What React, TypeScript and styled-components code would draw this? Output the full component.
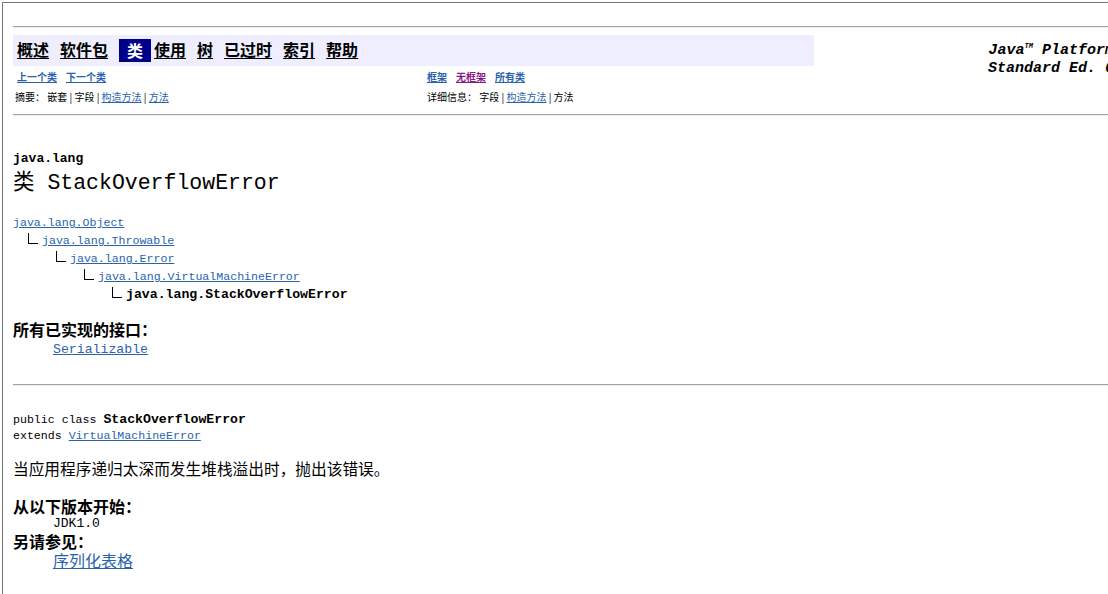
import React from "react";
import styled, { createGlobalStyle } from "styled-components";

const Global = createGlobalStyle`
  html, body { margin: 0; padding: 0; background: #ffffff; overflow: hidden; }
  body { font-family: "Noto Sans CJK SC", sans-serif; color: #000; }
`;

const LINK = "#2a63ab";
const CJK = `"Noto Sans CJK SC", sans-serif`;
const MONO = `"Liberation Mono", "Noto Sans CJK SC", monospace`;

const Frame = styled.div`
  margin: 2px 0 0 2px;
  width: 1112px;
  height: 600px;
  box-sizing: border-box;
  border-top: 1px solid #767676;
  border-left: 1px solid #767676;
  padding-left: 10px;
`;

const Rule = styled.hr<{ $top: number }>`
  margin: ${(p) => p.$top}px 0 0 0;
  height: 0;
  border: 0;
  border-top: 1px solid #a2a2a2;
  border-bottom: 1px solid #eeeeee;
`;

const Header = styled.div`
  display: grid;
  grid-template-columns: 801px 1fr;
  margin-top: 7px;
`;

const NavBar = styled.div`
  display: flex;
  align-items: center;
  height: 31px;
  background: #eeeeff;
`;

const NavLink = styled.a<{ $afterCurrent?: boolean }>`
  margin-bottom: 3px;
  padding: 0 7px 0 ${(p) => (p.$afterCurrent ? 3 : 4)}px;
  font-family: ${CJK};
  font-size: 16px;
  font-weight: 700;
  line-height: 20px;
  color: #000;
  text-decoration: underline;
  text-underline-offset: 2px;
`;

const NavCurrent = styled.span`
  display: flex;
  align-items: center;
  justify-content: center;
  margin: 0 0 1px 4px;
  width: 32px;
  height: 23px;
  background: #00008b;
  color: #fff;
  font-family: ${CJK};
  font-size: 16px;
  font-weight: 700;
`;

const SubNav = styled.div`
  display: grid;
  grid-template-columns: 414px 1fr;
  grid-auto-rows: 20px;
  align-items: center;
  margin-top: 1px;
  font-family: ${CJK};
  font-size: 10px;
  line-height: 14px;
`;

const SubCell = styled.div<{ $pad: number }>`
  padding-left: ${(p) => p.$pad}px;
  white-space: pre;
`;

const SmallLink = styled.a<{ $bold?: boolean; $visited?: boolean }>`
  color: ${(p) => (p.$visited ? "#8a1a8a" : LINK)};
  font-weight: ${(p) => (p.$bold ? 700 : 400)};
  text-decoration: underline;
  margin-right: ${(p) => (p.$bold ? 9 : 0)}px;
`;

const Platform = styled.div`
  padding-top: 7px;
  text-align: right;
  font-family: "Liberation Mono", monospace;
  font-style: italic;
  font-weight: 700;
  font-size: 15px;
  line-height: 18px;
  white-space: nowrap;
`;

const Sup = styled.sup`
  font-size: 7px;
  vertical-align: 6px;
  line-height: 0;
`;

const PackageLabel = styled.div`
  margin-top: 35px;
  font-family: ${MONO};
  font-weight: 700;
  font-size: 13px;
  line-height: 16px;
`;

const ClassTitle = styled.h2`
  margin: 3px 0 0;
  font-family: ${MONO};
  font-weight: 400;
  font-size: 21.5px;
  line-height: 26px;
`;

const Tree = styled.div`
  margin-top: 18px;
`;

const TreeRow = styled.div<{ $indent: number }>`
  display: flex;
  align-items: center;
  height: 18px;
  padding-left: ${(p) => p.$indent}px;
  font-family: ${MONO};
  font-size: 11.6px;
  line-height: 18px;
`;

const Elbow = styled.span`
  align-self: flex-start;
  margin: 1px 4px 0 0;
  width: 9px;
  height: 10px;
  border-left: 1px solid #000;
  border-bottom: 1px solid #000;
`;

const CodeLink = styled.a<{ $size?: number }>`
  color: ${LINK};
  text-decoration: underline;
  font-size: ${(p) => p.$size ?? 11.6}px;
`;

const Strong = styled.b`
  font-weight: 700;
  font-size: 13.2px;
`;

const Heading = styled.div<{ $top: number }>`
  margin-top: ${(p) => p.$top}px;
  font-family: ${CJK};
  font-weight: 700;
  font-size: 16px;
  line-height: 18px;
`;

const Indented = styled.div<{ $top?: number; $lh: number }>`
  margin-top: ${(p) => p.$top ?? 0}px;
  padding-left: 40px;
  line-height: ${(p) => p.$lh}px;
  font-family: ${MONO};
  font-size: 13px;
`;

const CjkLink = styled.a`
  color: ${LINK};
  text-decoration: underline;
  font-family: ${CJK};
  font-size: 16px;
`;

const Signature = styled.div`
  margin-top: 26px;
  font-family: ${MONO};
  font-size: 11.6px;
`;

const SigLine = styled.div`
  display: flex;
  align-items: center;
  height: 16px;
  line-height: 16px;
  white-space: pre;
`;

const Description = styled.p`
  margin: 15px 0 0;
  font-family: ${CJK};
  font-size: 15.7px;
  line-height: 20px;
`;

const navItems = ["概述", "软件包", "类", "使用", "树", "已过时", "索引", "帮助"];

const tree = [
  "java.lang.Object",
  "java.lang.Throwable",
  "java.lang.Error",
  "java.lang.VirtualMachineError",
];

export default function App() {
  return (
    <>
      <Global />
      <Frame>
        <Rule $top={23} />
        <Header>
          <div>
            <NavBar>
              {navItems.map((item, i) =>
                item === "类" ? (
                  <NavCurrent key={item}>{item}</NavCurrent>
                ) : (
                  <NavLink key={item} href="#" $afterCurrent={navItems[i - 1] === "类"}>
                    {item}
                  </NavLink>
                )
              )}
            </NavBar>
            <SubNav>
              <SubCell $pad={4}>
                <SmallLink href="#" $bold>上一个类</SmallLink>
                <SmallLink href="#" $bold>下一个类</SmallLink>
              </SubCell>
              <SubCell $pad={0}>
                <SmallLink href="#" $bold>框架</SmallLink>
                <SmallLink href="#" $bold $visited>无框架</SmallLink>
                <SmallLink href="#" $bold>所有类</SmallLink>
              </SubCell>
              <SubCell $pad={2}>
                {"摘要： 嵌套 | 字段 | "}
                <SmallLink href="#">构造方法</SmallLink>
                {" | "}
                <SmallLink href="#">方法</SmallLink>
              </SubCell>
              <SubCell $pad={0}>
                {"详细信息： 字段 | "}
                <SmallLink href="#">构造方法</SmallLink>
                {" | 方法"}
              </SubCell>
            </SubNav>
          </div>
          <Platform>
            Java<Sup>TM</Sup> Platform
            <br />
            Standard Ed. 6
          </Platform>
        </Header>
        <Rule $top={7} />

        <PackageLabel>java.lang</PackageLabel>
        <ClassTitle>类 StackOverflowError</ClassTitle>

        <Tree>
          {tree.map((name, i) => (
            <TreeRow key={name} $indent={i === 0 ? 0 : 15 + (i - 1) * 28}>
              {i > 0 && <Elbow />}
              <CodeLink href="#">{name}</CodeLink>
            </TreeRow>
          ))}
          <TreeRow $indent={15 + 3 * 28}>
            <Elbow />
            <Strong>java.lang.StackOverflowError</Strong>
          </TreeRow>
        </Tree>

        <Heading $top={16}>所有已实现的接口：</Heading>
        <Indented $top={3} $lh={18}>
          <CodeLink href="#" $size={13.2}>Serializable</CodeLink>
        </Indented>

        <Rule $top={25} />

        <Signature>
          <SigLine>
            {"public class "}
            <Strong>StackOverflowError</Strong>
          </SigLine>
          <SigLine>
            {"extends "}
            <CodeLink href="#">VirtualMachineError</CodeLink>
          </SigLine>
        </Signature>

        <Description>当应用程序递归太深而发生堆栈溢出时，抛出该错误。</Description>

        <Heading $top={18}>从以下版本开始：</Heading>
        <Indented $top={2} $lh={14}>JDK1.0</Indented>
        <Heading $top={1}>另请参见：</Heading>
        <Indented $top={1} $lh={18}>
          <CjkLink href="#">序列化表格</CjkLink>
        </Indented>
      </Frame>
    </>
  );
}
